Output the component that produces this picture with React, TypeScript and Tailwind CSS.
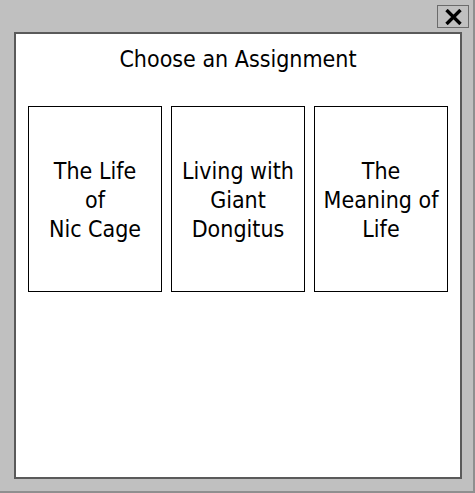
import React from 'react';

const assignments = [
  ['The Life', 'of', 'Nic Cage'],
  ['Living with', 'Giant', 'Dongitus'],
  ['The', 'Meaning of', 'Life'],
];

export default function App() {
  return (
    <div
      className="w-[475px] h-[493px] bg-[#c0c0c0] border-r-2 border-b-2 border-[#8f8f8f] flex flex-col"
      style={{ fontFamily: '"DejaVu Sans Condensed", "DejaVu Sans", sans-serif' }}
    >
      {/* Title bar */}
      <div className="h-[32px] flex justify-end items-start pt-[5px] pr-[4px]">
        <button className="w-[32px] h-[23px] border border-[#6b6b6b] flex items-center justify-center">
          <svg width="17" height="16" viewBox="0 0 17 16">
            <path d="M1.5 1 L15.5 15 M15.5 1 L1.5 15" stroke="#000" strokeWidth="3.4" />
          </svg>
        </button>
      </div>

      {/* Panel */}
      <div className="ml-[14px] mr-[11px] mb-[12px] flex-1 bg-white border-2 border-[#5a5a5a] flex flex-col px-[12px]">
        <h1 className="text-[23px] text-black text-center mt-[9px] leading-[32px]">Choose an Assignment</h1>
        <div className="flex gap-[9px] mt-[31px]">
          {assignments.map((lines, i) => (
            <div
              key={i}
              className="w-[134px] h-[186px] border border-black flex flex-col items-center justify-center pt-[3px] text-[23px] leading-[29px] text-black text-center"
            >
              {lines.map((l, j) => (
                <span key={j}>{l}</span>
              ))}
            </div>
          ))}
        </div>
      </div>
    </div>
  );
}
